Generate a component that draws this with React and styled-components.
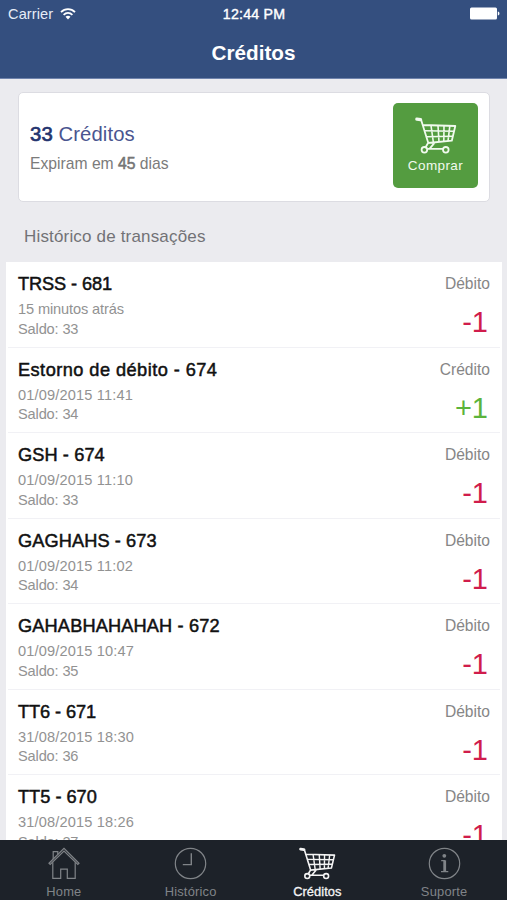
import React from "react";
import styled, { createGlobalStyle } from "styled-components";

const GlobalStyle = createGlobalStyle`
  * {
    box-sizing: border-box;
  }
  body {
    margin: 0;
    font-family: "Liberation Sans", Arial, sans-serif;
    background-color: #ebebef;
  }
`;

const Screen = styled.div`
  display: flex;
  flex-direction: column;
  width: 507px;
  height: 900px;
  overflow: hidden;
  background-color: #ebebef;
`;
const Header = styled.header`
  flex: none;
  height: 79px;
  background-color: #344f7f;
  border-bottom: 1px solid #6f83ac;
  color: white;
`;
const StatusBar = styled.div`
  display: grid;
  grid-template-columns: 1fr auto 1fr;
  align-items: center;
  height: 27px;
  padding: 0 7px 0 8px;
  font-size: 14.6px;
`;
const Carrier = styled.div`
  display: flex;
  align-items: center;
  gap: 7px;
  letter-spacing: 0.1px;
  color: #e6ecf7;
`;
const Clock = styled.div`
  font-size: 14.2px;
  letter-spacing: 0.2px;
  -webkit-text-stroke: 0.4px white;
`;
const Battery = styled.svg`
  justify-self: end;
  display: block;
`;
const Title = styled.h1`
  margin: 0;
  font-size: 20.7px;
  line-height: 51px;
  text-align: center;
`;

const Card = styled.section`
  flex: none;
  display: flex;
  justify-content: space-between;
  height: 110px;
  margin: 13px 17px 0 18px;
  padding: 10px 11px 0;
  background-color: white;
  border: 1px solid #dcdce2;
  border-radius: 5px;
`;
const Summary = styled.div`
  padding-top: 17px;
`;
const Amount = styled.div`
  font-size: 20.3px;
  line-height: 28px;
  letter-spacing: 0.1px;
  color: #4a5590;
  b {
    font-weight: normal;
    color: #24346f;
    -webkit-text-stroke: 0.7px #24346f;
  }
`;
const Expires = styled.div`
  margin-top: 3px;
  font-size: 15.7px;
  line-height: 26px;
  color: #7b7b7b;
  b {
    font-weight: normal;
    -webkit-text-stroke: 0.5px #6b6b6b;
  }
`;
const BuyButton = styled.button`
  display: flex;
  flex-direction: column;
  align-items: center;
  width: 85px;
  height: 85px;
  padding: 14px 0 0;
  border: none;
  border-radius: 5px;
  background-color: #549c40;
  color: #f1faee;
  font-family: inherit;
  font-size: 13.5px;
  line-height: 18px;
  letter-spacing: 0.4px;
  svg {
    display: block;
    margin-bottom: 3px;
  }
`;

const SectionTitle = styled.h2`
  flex: none;
  margin: 0 0 0 24px;
  height: 60px;
  padding-top: 23px;
  font-size: 17px;
  font-weight: normal;
  line-height: 24px;
  letter-spacing: 0.17px;
  color: #727276;
`;

const List = styled.div`
  flex: 1;
  min-height: 0;
  margin: 0 5px 0 6px;
  overflow: hidden;
  background-color: white;
`;
const Row = styled.div`
  display: flex;
  justify-content: space-between;
  height: 85.5px;
  margin: 0 2px;
  padding: 10px 10px 0;
  border-bottom: 1px solid #f1f1f5;
`;
const Name = styled.div`
  font-size: 18.2px;
  line-height: 24px;
  letter-spacing: ${(props) => props.spacing || 0}px;
  color: #111;
  white-space: nowrap;
  -webkit-text-stroke: 0.5px #111;
`;
const Detail = styled.div`
  font-size: 14.6px;
  line-height: 19.5px;
  letter-spacing: ${(props) => props.spacing || 0}px;
  color: #929292;
`;
const Details = styled.div`
  padding-top: 4px;
`;
const Movement = styled.div`
  text-align: right;
`;
const Kind = styled.div`
  font-size: 15.6px;
  line-height: 23px;
  color: #868686;
`;
const Value = styled.div`
  padding: 11px 2px 0 0;
  font-size: 29px;
  line-height: 33px;
  color: ${(props) => (props.credit ? "#5cb43c" : "#d01c4c")};
`;

const TabBar = styled.nav`
  flex: none;
  display: grid;
  grid-template-columns: repeat(4, 1fr);
  height: 60px;
  background-color: #1d2229;
`;
const Tab = styled.div`
  display: flex;
  flex-direction: column;
  align-items: center;
  padding: 7px 0 0 1px;
  font-size: 12.9px;
  line-height: 16px;
  letter-spacing: ${(props) => (props.active ? "0.05px" : "0.2px")};
  color: ${(props) => (props.active ? "#f4f4f4" : "#808488")};
  -webkit-text-stroke: ${(props) => (props.active ? "0.3px" : "0")};
  svg {
    display: block;
    margin-bottom: 4px;
  }
`;

function CartIcon(props) {
  return (
    <svg
      width={props.width}
      height={props.height}
      viewBox="0 0 42 37"
      fill="none"
      stroke="currentColor"
      strokeWidth="1.8"
      strokeLinejoin="round"
    >
      <path d="M1.8 2.2L5.6 2.7" strokeWidth="3.2" strokeLinecap="round" />
      <path d="M6 2.5L13.2 25.8L10.2 31M8 8L40.3 9L36.8 23.7L13 26M19.5 25.8L14.5 31.8M12.5 31.8H28" />
      <path
        d="M9.8 13.8L39 14.3M11.3 19.7L37.8 19.3M16 8.5L18.4 25.5M23 8.7L24 25M29 8.9L28.8 24.5M34.8 9.1L33 24.2"
        strokeWidth="1.6"
      />
      <circle cx="9.4" cy="32.8" r="2.8" />
      <circle cx="30.8" cy="32.8" r="2.8" />
    </svg>
  );
}
function HomeIcon() {
  return (
    <svg
      width="32"
      height="33"
      viewBox="0 0 32 33"
      fill="none"
      stroke="currentColor"
      strokeWidth="1.2"
    >
      <path d="M1 16.3L16 1.4L31 16.3L29.8 17.5L16 4L2.2 17.5Z" />
      <path d="M4.8 15.3V31.4H12.7V22.2H19.3V31.4H27.2V15.3M5.2 12V4.6H9.8V7.4" />
    </svg>
  );
}
function ClockIcon() {
  return (
    <svg
      width="33"
      height="33"
      viewBox="0 0 33 33"
      fill="none"
      stroke="currentColor"
      strokeWidth="1.2"
    >
      <circle cx="16.5" cy="16.5" r="15.2" />
      <path d="M17.3 6.2V17.6H8.8" strokeWidth="1.4" />
    </svg>
  );
}
function InfoIcon() {
  return (
    <svg
      width="33"
      height="33"
      viewBox="0 0 33 33"
      fill="none"
      stroke="currentColor"
      strokeWidth="1.2"
    >
      <circle cx="16.5" cy="16.5" r="15.2" />
      <circle cx="16.3" cy="8.8" r="1.9" fill="currentColor" stroke="none" />
      <path d="M16.7 13.3V24.5" strokeWidth="2.8" />
      <path d="M13.2 13.7H17M13 24.7H20.3" />
    </svg>
  );
}
function WifiIcon() {
  return (
    <svg width="16" height="12" viewBox="0 0 16 12" fill="none" stroke="white">
      <path d="M1 4.2C5 0.2 11 0.2 15 4.2" strokeWidth="1.8" />
      <path d="M3.6 6.8C6.2 4.3 9.8 4.3 12.4 6.8" strokeWidth="1.8" />
      <path d="M5.5 8.8C7 7.5 9 7.5 10.5 8.8L8 11.5Z" fill="white" stroke="none" />
    </svg>
  );
}

const transactions = [
  {
    name: "TRSS - 681",
    date: "15 minutos atrás",
    balance: 33,
    spacing: -0.1,
    dateSpacing: -0.12,
  },
  {
    name: "Estorno de débito - 674",
    date: "01/09/2015 11:41",
    balance: 34,
    spacing: 0.45,
    credit: true,
  },
  { name: "GSH - 674", date: "01/09/2015 11:10", balance: 33, spacing: 0.1 },
  { name: "GAGHAHS - 673", date: "01/09/2015 11:02", balance: 34, spacing: 0.1 },
  {
    name: "GAHABHAHAHAH - 672",
    date: "01/09/2015 10:47",
    balance: 35,
    spacing: 0.15,
  },
  { name: "TT6 - 671", date: "31/08/2015 18:30", balance: 36, spacing: -0.1 },
  { name: "TT5 - 670", date: "31/08/2015 18:26", balance: 37, spacing: 0 },
];

function Transaction(props) {
  const { name, date, balance, credit, spacing, dateSpacing } = props.value;
  return (
    <Row>
      <div>
        <Name spacing={spacing}>{name}</Name>
        <Details>
          <Detail spacing={dateSpacing || 0.15}>{date}</Detail>
          <Detail spacing={-0.15}>Saldo: {balance}</Detail>
        </Details>
      </div>
      <Movement>
        <Kind>{credit ? "Crédito" : "Débito"}</Kind>
        <Value credit={credit}>{credit ? "+1" : "-1"}</Value>
      </Movement>
    </Row>
  );
}

export default function App() {
  return (
    <Screen>
      <GlobalStyle />
      <Header>
        <StatusBar>
          <Carrier>
            Carrier
            <WifiIcon />
          </Carrier>
          <Clock>12:44 PM</Clock>
          <Battery width="31" height="13" viewBox="0 0 31 13" fill="white">
            <rect x="1" y="0.5" width="27" height="12" rx="1.5" />
            <path d="M28.8 4.5C31 5 31 8 28.8 8.5Z" />
          </Battery>
        </StatusBar>
        <Title>Créditos</Title>
      </Header>
      <Card>
        <Summary>
          <Amount>
            <b>33</b> Créditos
          </Amount>
          <Expires>
            Expiram em <b>45</b> dias
          </Expires>
        </Summary>
        <BuyButton>
          <CartIcon width="42" height="37" />
          Comprar
        </BuyButton>
      </Card>
      <SectionTitle>Histórico de transações</SectionTitle>
      <List>
        {transactions.map((value) => (
          <Transaction key={value.name} value={value} />
        ))}
      </List>
      <TabBar>
        <Tab>
          <HomeIcon />
          Home
        </Tab>
        <Tab>
          <ClockIcon />
          Histórico
        </Tab>
        <Tab active>
          <CartIcon width="37" height="33" />
          Créditos
        </Tab>
        <Tab>
          <InfoIcon />
          Suporte
        </Tab>
      </TabBar>
    </Screen>
  );
}
